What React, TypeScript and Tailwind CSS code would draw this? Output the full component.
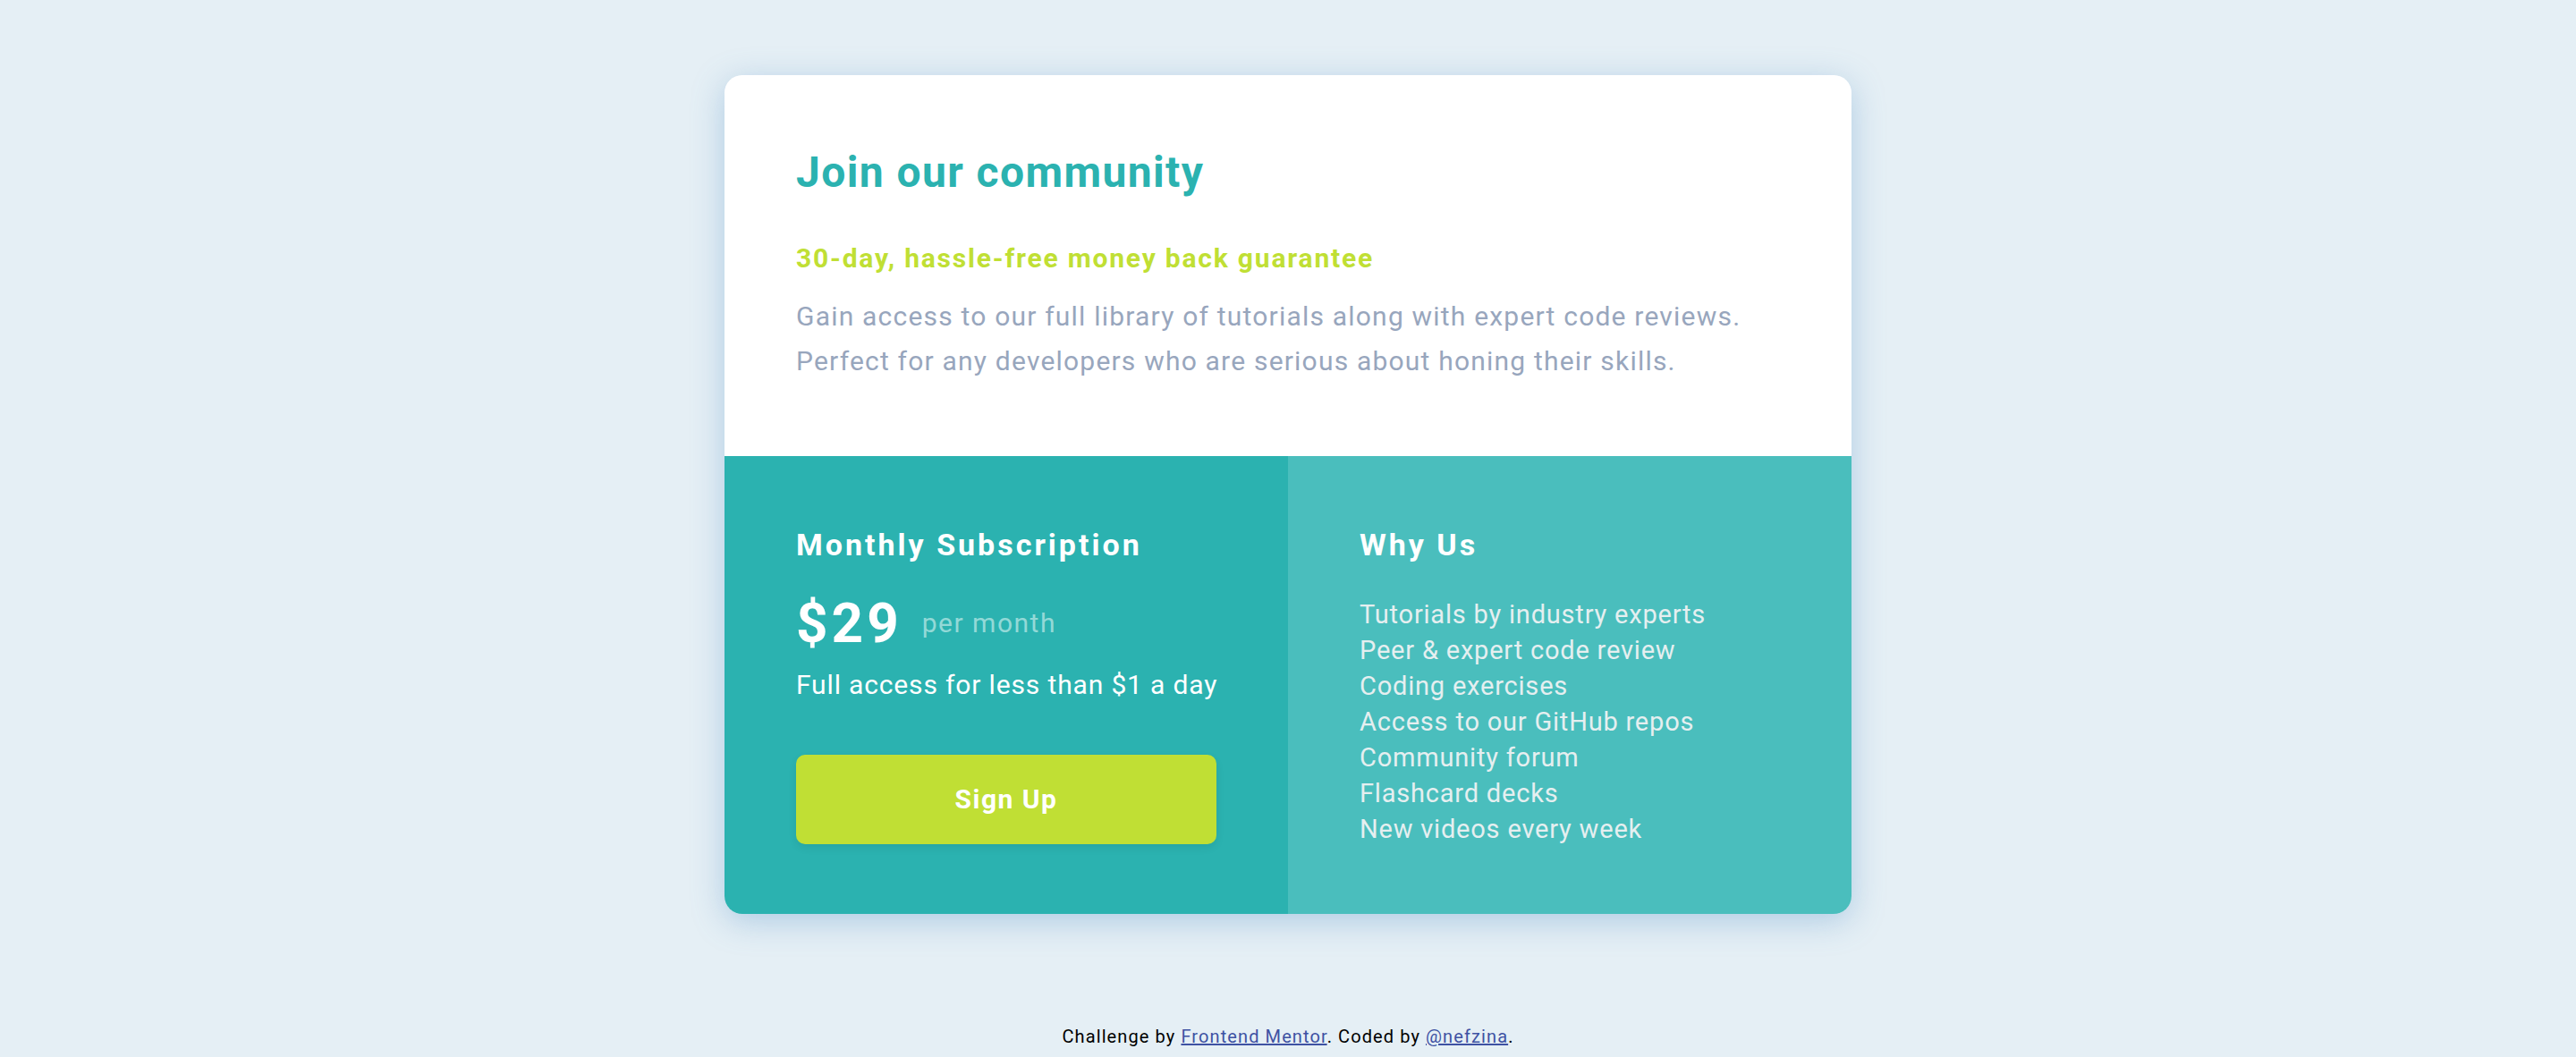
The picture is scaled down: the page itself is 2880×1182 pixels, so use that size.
const perks = [
  "Tutorials by industry experts",
  "Peer & expert code review",
  "Coding exercises",
  "Access to our GitHub repos",
  "Community forum",
  "Flashcard decks",
  "New videos every week",
];

export default function App() {
  return (
    <div className="flex min-h-[1182px] flex-col items-center bg-[#e5eff5] font-['Roboto',sans-serif]">
      <main className="mt-[84px] w-[1260px] overflow-hidden rounded-[20px] shadow-[0_8px_36px_rgba(88,148,200,0.38)]">
        <section className="bg-white px-[80px] pt-[85px] pb-[81px]">
          <h1 className="text-[48px] leading-[48px] font-bold tracking-[1.4px] text-[#2bb2b0]">
            Join our community
          </h1>
          <h2 className="mt-[54px] text-[30px] leading-[36px] font-bold tracking-[1.8px] text-[#c0df34]">
            30-day, hassle-free money back guarantee
          </h2>
          <p className="mt-[22px] text-[30px] leading-[50px] tracking-[1.2px] text-[#98a6bd]">
            Gain access to our full library of tutorials along with expert code reviews.
            <br />
            Perfect for any developers who are serious about honing their skills.
          </p>
        </section>

        <div className="grid grid-cols-2">
          <section className="bg-[#2bb2b0] px-[80px] pt-[79px] pb-[75px] text-white">
            <h3 className="text-[34px] leading-[40px] font-bold tracking-[3px]">Monthly Subscription</h3>
            <div className="mt-[36px] flex h-[64px] items-center gap-[22px]">
              <span className="text-[62px] leading-[64px] font-bold tracking-[4px]">$29</span>
              <span className="text-[30px] leading-[36px] tracking-[1.5px] text-[#93d9d7]">per month</span>
            </div>
            <p className="mt-[19px] whitespace-nowrap text-[30px] leading-[36px] tracking-[0.85px]">
              Full access for less than $1 a day
            </p>
            <button className="mt-[60px] flex h-[100px] w-full items-center justify-center rounded-[10px] bg-[#c0df34] text-[30px] leading-[36px] font-bold tracking-[1.5px] text-white shadow-[0_4px_10px_rgba(0,0,0,0.08)]">
              Sign Up
            </button>
          </section>

          <section className="bg-[#4abebd] px-[80px] pt-[79px] pb-[75px] text-white">
            <h3 className="text-[34px] leading-[40px] font-bold tracking-[3px]">Why Us</h3>
            <ul className="mt-[38px] text-[29px] leading-[40px] tracking-[0.8px] text-[#e5eff0]">
              {perks.map((perk) => (
                <li key={perk}>{perk}</li>
              ))}
            </ul>
          </section>
        </div>
      </main>

      <footer className="mt-[125px] text-center text-[20px] leading-[24px] tracking-[1.1px] text-black">
        Challenge by{" "}
        <a href="#" className="text-[#3e52a3] underline">
          Frontend Mentor
        </a>
        . Coded by{" "}
        <a href="#" className="text-[#3e52a3] underline">
          @nefzina
        </a>
        .
      </footer>
    </div>
  );
}
